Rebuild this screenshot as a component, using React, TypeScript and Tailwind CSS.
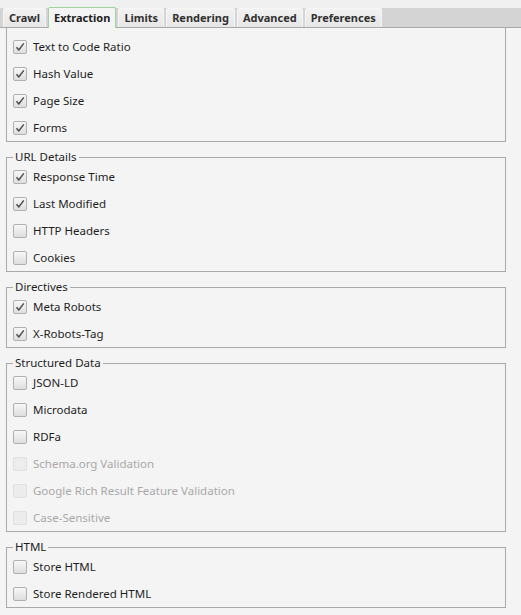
import React from 'react'

type Item = { label: string; checked?: boolean; disabled?: boolean }

const TABS = ['Crawl', 'Extraction', 'Limits', 'Rendering', 'Advanced', 'Preferences']

const GROUPS: { title?: string; items: Item[] }[] = [
  {
    items: [
      { label: 'Text to Code Ratio', checked: true },
      { label: 'Hash Value', checked: true },
      { label: 'Page Size', checked: true },
      { label: 'Forms', checked: true },
    ],
  },
  {
    title: 'URL Details',
    items: [
      { label: 'Response Time', checked: true },
      { label: 'Last Modified', checked: true },
      { label: 'HTTP Headers' },
      { label: 'Cookies' },
    ],
  },
  {
    title: 'Directives',
    items: [
      { label: 'Meta Robots', checked: true },
      { label: 'X-Robots-Tag', checked: true },
    ],
  },
  {
    title: 'Structured Data',
    items: [
      { label: 'JSON-LD' },
      { label: 'Microdata' },
      { label: 'RDFa' },
      { label: 'Schema.org Validation', disabled: true },
      { label: 'Google Rich Result Feature Validation', disabled: true },
      { label: 'Case-Sensitive', disabled: true },
    ],
  },
  {
    title: 'HTML',
    items: [{ label: 'Store HTML' }, { label: 'Store Rendered HTML' }],
  },
]

function Check({ item }: { item: Item }) {
  return (
    <div className="h-[27px] flex items-center">
      <span
        className={
          item.disabled
            ? 'size-[14px] rounded-[2px] border border-[#e0e0e0] bg-[#ececec] flex items-center justify-center'
            : 'size-[14px] rounded-[2px] border border-[#b0b0b0] bg-gradient-to-b from-[#f7f7f7] to-[#dedede] flex items-center justify-center'
        }
      >
        {item.checked && (
          <svg width="10" height="10" viewBox="0 0 10 10" fill="none">
            <path d="M1.5 5.2 L3.8 8 L8.8 1.4" stroke="#505050" strokeWidth="1.5" strokeLinejoin="round" />
          </svg>
        )}
      </span>
      <span className={item.disabled ? 'ml-[6px] text-[#a8a8a8]' : 'ml-[6px] text-[#1e1e1e]'}>{item.label}</span>
    </div>
  )
}

export default function App() {
  return (
    <div className="w-[521px] h-[615px] bg-[#f4f4f4] overflow-hidden text-[11.5px] font-['Segoe_UI','Noto_Sans',sans-serif]">
      <div className="h-[28px] bg-[#d4d4d4] border-t-[8px] border-[#f0f0f0] flex items-end gap-[2px] pl-[3px] border-b border-b-[#a8a8a8]">
        {TABS.map((t) => {
          const sel = t === 'Extraction'
          return (
            <div
              key={t}
              className={
                sel
                  ? 'h-[21px] -mb-px px-[5px] flex items-center text-[11px] font-bold text-[#202020] bg-[#f4f4f4] border border-b-0 border-[#9fd39f] rounded-t-[2px]'
                  : 'h-[19px] px-[5px] flex items-center text-[11px] font-bold text-[#303030] bg-gradient-to-b from-[#f2f2f2] to-[#e6e6e6] border border-b-0 border-[#f6f6f6] rounded-t-[2px]'
              }
            >
              {t}
            </div>
          )
        })}
      </div>

      <div className="pl-[6px] w-[506px] flex flex-col gap-[9px]">
        {GROUPS.map((g, i) =>
          g.title ? (
            <fieldset key={i} className="border border-[#a9a9a9] pl-[6px]">
              <legend className="px-[2px] leading-[12px] text-[#1e1e1e]">{g.title}</legend>
              {g.items.map((it) => (
                <Check key={it.label} item={it} />
              ))}
            </fieldset>
          ) : (
            <div key={i} className="border-x border-b border-[#a9a9a9] pl-[6px] pt-[5px]">
              {g.items.map((it) => (
                <Check key={it.label} item={it} />
              ))}
            </div>
          )
        )}
      </div>
    </div>
  )
}
